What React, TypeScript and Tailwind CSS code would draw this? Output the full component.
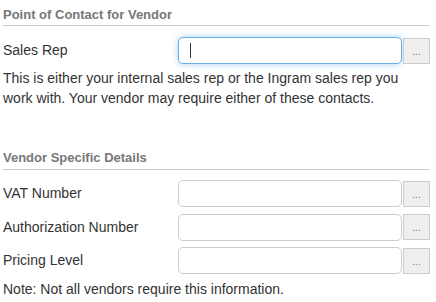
const inputBase =
  "h-[27px] w-[224px] rounded-[5px] border bg-white px-2 text-[14px] outline-none";

function Field({ label, focused }: { label: string; focused?: boolean }) {
  return (
    <div className="flex items-center">
      <div className="w-[175px] text-[14px] text-[#333]">{label}</div>
      <div
        className={
          focused
            ? inputBase + " flex items-center border-[#66afe9] shadow-[0_0_6px_rgba(102,175,233,0.6)]"
            : inputBase + " border-[#ccc]"
        }
      >
        {focused && <span className="ml-[3px] h-[15px] w-px bg-[#333]" />}
      </div>
      <button className="ml-[1px] flex h-[26px] w-[27px] items-end justify-center border border-[#ccc] bg-[#eee] pb-[6px] text-[10px] leading-[10px] text-[#777]">
        ...
      </button>
    </div>
  );
}

export default function App() {
  return (
    <div
      className="w-[436px] h-[302px] bg-white pl-[3px] pt-[6px] text-[#333]"
      style={{ fontFamily: '"Liberation Sans", Arial, sans-serif' }}
    >
      <div className="w-[427px]">
        <h3 className="border-b border-[#ccc] pb-[1px] text-[13px] font-bold leading-[18px] text-[#777]">
          Point of Contact for Vendor
        </h3>
        <div className="mt-[11px]">
          <Field label="Sales Rep" focused />
        </div>
        <p className="mt-[4px] text-[14px] leading-[20px]">
          This is either your internal sales rep or the Ingram sales rep you work with. Your vendor may require either of these contacts.
        </p>

        <h3 className="mt-[41px] border-b border-[#ccc] pb-[2px] text-[13px] font-bold leading-[18px] text-[#777]">
          Vendor Specific Details
        </h3>
        <div className="mt-[10px] flex flex-col gap-[6.5px]">
          <Field label="VAT Number" />
          <Field label="Authorization Number" />
          <Field label="Pricing Level" />
        </div>
        <p className="mt-[5px] text-[14px] leading-[20px]">Note: Not all vendors require this information.</p>
      </div>
    </div>
  );
}
